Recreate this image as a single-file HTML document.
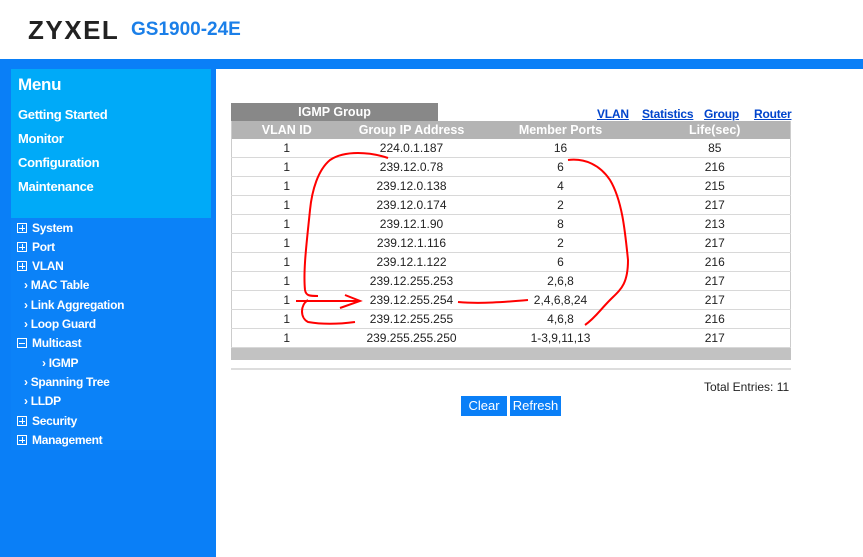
<!DOCTYPE html><html><head><style>
body{margin:0;width:863px;height:557px;position:relative;overflow:hidden;background:#fff;font-family:"Liberation Sans",sans-serif}
.a{position:absolute}
.m{color:#fff;font-weight:bold;font-size:13px;letter-spacing:-0.3px}
.s{color:#fff;font-weight:bold;font-size:12px;letter-spacing:-0.3px}
.bx{display:inline-block;width:8px;height:8px;border:1px solid #fff;position:relative;margin-right:5px;vertical-align:-1px}
.bx:before{content:"";position:absolute;left:1px;right:1px;top:3.5px;height:1px;background:#fff}
.bx.p:after{content:"";position:absolute;top:1px;bottom:1px;left:3.5px;width:1px;background:#fff}
table{border-collapse:collapse;font-size:12px;color:#222;border-left:1px solid #ccc;border-right:1px solid #ccc;table-layout:fixed}
td{height:18px;border-bottom:1px solid #d8d8d8;text-align:center;padding:0}
th{background:#b4b4b4;color:#fff;height:18px;font-size:12.5px;padding:0}
.lk{color:#0044cc;font-weight:bold;font-size:12px;text-decoration:underline;letter-spacing:-0.2px}
</style></head><body>
<div class="a" style="left:28px;top:15px;font-size:26px;font-weight:bold;color:#222;letter-spacing:1.5px">ZYXEL</div>
<div class="a" style="left:131px;top:19px;font-size:19px;font-weight:bold;color:#1b7fe8">GS1900-24E</div>
<div class="a" style="left:0;top:59px;width:863px;height:498px;background:#0a7ff7"></div>
<div class="a" style="left:216px;top:69px;width:647px;height:488px;background:#fff"></div>
<div class="a" style="left:11px;top:69px;width:200px;height:149px;background:#00aaf8"></div>
<div class="a" style="left:11px;top:218px;width:202px;height:232px;background:#0b82f8"></div>
<div class="a m" style="left:18px;top:75px;font-size:17px">Menu</div>
<div class="a m" style="left:18px;top:107px">Getting Started</div>
<div class="a m" style="left:18px;top:131px">Monitor</div>
<div class="a m" style="left:18px;top:155px">Configuration</div>
<div class="a m" style="left:18px;top:179px">Maintenance</div>
<div class="a s" style="left:17px;top:221px"><span class="bx p"></span>System</div>
<div class="a s" style="left:17px;top:240px"><span class="bx p"></span>Port</div>
<div class="a s" style="left:17px;top:259px"><span class="bx p"></span>VLAN</div>
<div class="a s" style="left:24px;top:278px">› MAC Table</div>
<div class="a s" style="left:24px;top:298px">› Link Aggregation</div>
<div class="a s" style="left:24px;top:317px">› Loop Guard</div>
<div class="a s" style="left:17px;top:336px"><span class="bx"></span>Multicast</div>
<div class="a s" style="left:42px;top:356px">› IGMP</div>
<div class="a s" style="left:24px;top:375px">› Spanning Tree</div>
<div class="a s" style="left:24px;top:394px">› LLDP</div>
<div class="a s" style="left:17px;top:414px"><span class="bx p"></span>Security</div>
<div class="a s" style="left:17px;top:433px"><span class="bx p"></span>Management</div>

<div class="a" style="left:231px;top:103px;width:207px;height:18px;background:#888;color:#fff;font-weight:bold;font-size:12.5px;text-align:center;line-height:18px">IGMP Group</div>
<div class="a" style="left:597px;top:105px"><span class="lk">VLAN</span></div>
<div class="a" style="left:642px;top:105px"><span class="lk">Statistics</span></div>
<div class="a" style="left:704px;top:105px"><span class="lk">Group</span></div>
<div class="a" style="left:754px;top:105px"><span class="lk">Router</span></div>
<table class="a" style="left:231px;top:121px;width:560px">
<colgroup><col style="width:110px"><col style="width:140px"><col style="width:158px"><col></colgroup>
<tr><th>VLAN ID</th><th>Group IP Address</th><th>Member Ports</th><th>Life(sec)</th></tr>
<tr><td>1</td><td>224.0.1.187</td><td>16</td><td>85</td></tr>
<tr><td>1</td><td>239.12.0.78</td><td>6</td><td>216</td></tr>
<tr><td>1</td><td>239.12.0.138</td><td>4</td><td>215</td></tr>
<tr><td>1</td><td>239.12.0.174</td><td>2</td><td>217</td></tr>
<tr><td>1</td><td>239.12.1.90</td><td>8</td><td>213</td></tr>
<tr><td>1</td><td>239.12.1.116</td><td>2</td><td>217</td></tr>
<tr><td>1</td><td>239.12.1.122</td><td>6</td><td>216</td></tr>
<tr><td>1</td><td>239.12.255.253</td><td>2,6,8</td><td>217</td></tr>
<tr><td>1</td><td>239.12.255.254</td><td>2,4,6,8,24</td><td>217</td></tr>
<tr><td>1</td><td>239.12.255.255</td><td>4,6,8</td><td>216</td></tr>
<tr><td>1</td><td>239.255.255.250</td><td>1-3,9,11,13</td><td>217</td></tr>
</table>
<div class="a" style="left:231px;top:348px;width:560px;height:12px;background:#c2c2c2"></div>
<div class="a" style="left:231px;top:368px;width:560px;height:2px;background:#ddd"></div>
<div class="a" style="left:704px;top:380px;font-size:12px;color:#222">Total Entries: 11</div>
<div class="a" style="left:461px;top:396px;width:46px;height:20px;background:#0a7ff7;color:#fff;font-size:13px;text-align:center;line-height:20px">Clear</div>
<div class="a" style="left:510px;top:396px;width:51px;height:20px;background:#0a7ff7;color:#fff;font-size:13px;text-align:center;line-height:20px">Refresh</div>
<svg class="a" style="left:0;top:0" width="863" height="557" fill="none" stroke="#f00" stroke-width="2">
<path d="M388 158 C370 152 345 150 330 160 C318 170 312 190 310 210 C307 240 303 270 305 290 C306 296 310 296 318 296"/>
<path d="M296 301 L360 301 M345 295 L360 301 L340 308"/>
<path d="M308 300 C300 305 300 318 308 322 C325 325 340 324 355 322"/>
<path d="M458 302 C480 304 505 302 528 300"/>
<path d="M568 160 C585 158 600 165 610 180 C622 200 625 230 628 260 C628 285 620 290 610 300 C600 310 595 318 585 325"/>
</svg>
</body></html>
